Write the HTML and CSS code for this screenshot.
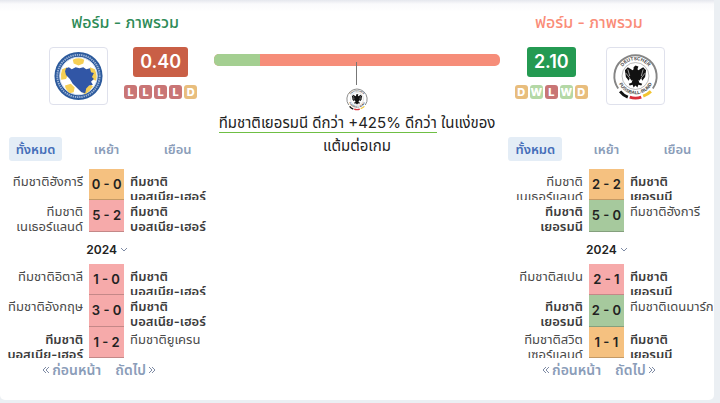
FILE: index.html
```html
<!DOCTYPE html>
<html lang="th">
<head>
<meta charset="utf-8">
<meta name="viewport" content="width=device-width, initial-scale=1">
<title>ฟอร์ม - ภาพรวม</title>
<link rel="stylesheet" href="styles.css">
</head>
<body>
<main class="card">
  <section class="team">
    <h2 class="title title-home">ฟอร์ม - ภาพรวม</h2>
    <div class="summary">
      <div class="crest">
        <svg viewBox="0 0 52 52" role="img" aria-label="บอสเนีย">
          <circle cx="26" cy="26" r="25" fill="#2c5a9c"/>
          <circle cx="26" cy="26" r="22" fill="none" stroke="#9db4d8" stroke-width="2" stroke-dasharray="1.4 .9"/>
          <circle cx="26" cy="26" r="19.5" fill="#fff" stroke="#dbe4f2" stroke-width="1"/>
          <path d="M20 9q6-3 12 0l-1 4-5 2-5-2zM9 19l5-2 2 6-3 6-5 1q-1-6 1-11zM38 17l5 2q3 7 1 12l-4-2-3-6zM12 36l6-2 4 4-1 5-4 1q-5-4-5-8zM33 38l6-3 2 2q-3 5-8 8l-3-2z" fill="#f6cf55"/>
          <path d="M13 18l3-1 3 2 4-2 4 1 4-1 3 2 4-1 1 4 3 1-2 4 2 2-3 3 2 3-4 1-3 3-1 5-4-1-5-5-4-4-3-5-4-4-1-4z" fill="#3156a6"/>
        </svg>
      </div>
      <div class="rating">
        <strong class="score score-low">0.40</strong>
        <div class="form"><span class="l">L</span><span class="l">L</span><span class="l">L</span><span class="l">L</span><span class="d">D</span></div>
      </div>
    </div>
    <nav class="tabs"><button type="button" class="tab active">ทั้งหมด</button><button type="button" class="tab">เหย้า</button><button type="button" class="tab">เยือน</button></nav>
    <div class="matches">
      <div class="match"><span class="name">ทีมชาติฮังการี</span><span class="result draw">0 - 0</span><b class="name">ทีมชาติ<br>บอสเนีย-เฮอร์</b></div>
      <div class="match"><span class="name">ทีมชาติ<br>เนเธอร์แลนด์</span><span class="result loss">5 - 2</span><b class="name">ทีมชาติ<br>บอสเนีย-เฮอร์</b></div>
    </div>
    <button type="button" class="year">2024<svg viewBox="0 0 8 6" aria-hidden="true"><path d="M1 1l3 3 3-3"/></svg></button>
    <div class="matches">
      <div class="match"><span class="name">ทีมชาติอิตาลี</span><span class="result loss">1 - 0</span><b class="name">ทีมชาติ<br>บอสเนีย-เฮอร์</b></div>
      <div class="match"><span class="name">ทีมชาติอังกฤษ</span><span class="result loss">3 - 0</span><b class="name">ทีมชาติ<br>บอสเนีย-เฮอร์</b></div>
      <div class="match"><b class="name">ทีมชาติ<br>บอสเนีย-เฮอร์</b><span class="result loss">1 - 2</span><span class="name">ทีมชาติยูเครน</span></div>
    </div>
    <nav class="pager"><a href="#prev"><svg viewBox="0 0 8 8" aria-hidden="true"><path d="M4 1L1 4l3 3M7 1L4 4l3 3"/></svg>ก่อนหน้า</a><a href="#next">ถัดไป<svg viewBox="0 0 8 8" aria-hidden="true"><path d="M1 1l3 3-3 3M4 1l3 3-3 3"/></svg></a></nav>
  </section>

  <section class="compare">
    <div class="bar"><span class="bar-home"></span></div>
    <div class="pointer"></div>
    <svg class="badge" viewBox="0 0 52 52" aria-hidden="true"><use href="#dfb"/></svg>
    <p class="insight"><span class="mark">ทีมชาติเยอรมนี ดีกว่า +425% ดีกว่า</span> ในแง่ของ<br>แต้มต่อเกม</p>
  </section>

  <section class="team">
    <h2 class="title title-away">ฟอร์ม - ภาพรวม</h2>
    <div class="summary summary-away">
      <div class="rating">
        <strong class="score score-high">2.10</strong>
        <div class="form"><span class="d">D</span><span class="w">W</span><span class="l">L</span><span class="w">W</span><span class="d">D</span></div>
      </div>
      <div class="crest">
        <svg viewBox="0 0 52 52" role="img" aria-label="Deutscher Fussball-Bund">
          <defs>
            <path id="arc-top" d="M9.5 26a16.500 16.500 0 0 1 33 0"/>
            <path id="arc-bottom" d="M7 26a19 19 0 0 0 38 0"/>
          </defs>
          <g id="dfb">
            <circle cx="26" cy="26" r="24" fill="#fff"/>
            <path d="M8 39A22 22 0 1 1 44 39" fill="none" stroke="#858585" stroke-width="2"/>
            <circle cx="26" cy="26" r="14" fill="none" stroke="#999" stroke-width=".7"/>
            <text class="ring"><textPath href="#arc-top" startOffset="50%">DEUTSCHER</textPath></text>
            <text class="ring"><textPath href="#arc-bottom" startOffset="50%">FUSSBALL-BUND</textPath></text>
            <path d="M24 17l2-2 3 1-1 3 1 1 5-3 3 3-1 7-3 4-1-3-2 3-1-1 1 3 3 1-1 2-3-1-1 3-2-2-2 2-1-3-3 1-1-2 3-1 1-3-1 1-2-3-1 3-3-4-1-7 3-3 5 3 1-1z" fill="#111"/>
            <path d="M18 19l2 7M34 19l-2 7M16 23l4 5M36 23l-4 5" stroke="#fff" stroke-width=".6"/>
            <path d="M10 42q3 4 8 6" fill="none" stroke="#111" stroke-width="3"/>
            <path d="M20 48q6 2 12 0" fill="none" stroke="#d9303b" stroke-width="3"/>
            <path d="M34 47q5-2 8-5" fill="none" stroke="#f3c530" stroke-width="3"/>
          </g>
        </svg>
      </div>
    </div>
    <nav class="tabs"><button type="button" class="tab active">ทั้งหมด</button><button type="button" class="tab">เหย้า</button><button type="button" class="tab">เยือน</button></nav>
    <div class="matches">
      <div class="match"><span class="name">ทีมชาติ<br>เนเธอร์แลนด์</span><span class="result draw">2 - 2</span><b class="name">ทีมชาติ<br>เยอรมนี</b></div>
      <div class="match"><b class="name">ทีมชาติ<br>เยอรมนี</b><span class="result win">5 - 0</span><span class="name">ทีมชาติฮังการี</span></div>
    </div>
    <button type="button" class="year">2024<svg viewBox="0 0 8 6" aria-hidden="true"><path d="M1 1l3 3 3-3"/></svg></button>
    <div class="matches">
      <div class="match"><span class="name">ทีมชาติสเปน</span><span class="result loss">2 - 1</span><b class="name">ทีมชาติ<br>เยอรมนี</b></div>
      <div class="match"><b class="name">ทีมชาติ<br>เยอรมนี</b><span class="result win">2 - 0</span><span class="name">ทีมชาติเดนมาร์ก</span></div>
      <div class="match"><span class="name">ทีมชาติสวิต<br>เซอร์แลนด์</span><span class="result draw">1 - 1</span><b class="name">ทีมชาติ<br>เยอรมนี</b></div>
    </div>
    <nav class="pager"><a href="#prev"><svg viewBox="0 0 8 8" aria-hidden="true"><path d="M4 1L1 4l3 3M7 1L4 4l3 3"/></svg>ก่อนหน้า</a><a href="#next">ถัดไป<svg viewBox="0 0 8 8" aria-hidden="true"><path d="M1 1l3 3-3 3M4 1l3 3-3 3"/></svg></a></nav>
  </section>
</main>
</body>
</html>
```
FILE: styles.css
```css
* { box-sizing: border-box; }
body {
  margin: 0;
  padding-right: 6px;
  background: #ebeff3;
  color: #222;
  font: 12px/15px Inter, "Noto Sans Thai", "Noto Sans", sans-serif;
}
button { font: inherit; border: 0; background: none; padding: 0; cursor: pointer; }
.card {
  display: grid;
  grid-template-columns: 3fr 4fr 3fr;
  padding-bottom: 20px;
  background: linear-gradient(#e5e7ee, #fafafc 4px, #fff 12px);
  border-radius: 0 0 5px 5px;
}
.team { display: flex; flex-direction: column; min-width: 0; }
.title { margin: 12px 0 15px; padding-left: 36px; text-align: center; font-size: 16px; line-height: 20px; font-weight: 500; }
.title-home { color: #2e8b57; }
.title-away { padding: 0 36px 0 0; color: #fa8c78; }
.summary { display: flex; justify-content: flex-end; gap: 16px; padding-right: 17px; }
.summary-away { justify-content: flex-start; padding: 0 0 0 15px; gap: 18px; }
.crest { width: 59px; height: 58px; padding: 3px; border: 1px solid #dfe1ec; border-radius: 4px; background: #fff; }
.crest svg { display: block; width: 100%; height: 100%; }
.ring { font: 600 5px "Liberation Sans", sans-serif; text-anchor: middle; fill: #444; }
.rating { display: flex; flex-direction: column; align-items: center; gap: 8px; }
.score { padding: 0 7px; border-radius: 3px; color: #fff; font-size: 18px; line-height: 30px; font-weight: 600; }
.score-low { background: #c95f46; }
.score-high { background: #249a52; }
.form { display: flex; gap: 2px; }
.form span { width: 13px; border-radius: 3px; color: #fff; font-size: 11px; line-height: 14px; font-weight: 800; text-align: center; }
.form .l { background: #c97575; }
.form .d { background: #e8bd7d; }
.form .w { background: #b4d8a5; }
.tabs { display: grid; grid-template-columns: repeat(3, 1fr); justify-items: center; margin-top: 32px; padding-right: 1px; }
.tab { padding: 0 7px; border-radius: 3px; color: #8b9db9; font-size: 13px; font-weight: 600; line-height: 24px; }
.tab.active { background: #e4edf6; color: #466fb9; }
.matches { margin-top: 8px; padding-right: 1px; }
.match { display: grid; grid-template-columns: minmax(0, 1fr) 35px minmax(0, 1fr); height: 31px; white-space: nowrap; }
.match:nth-child(even) { height: 32px; }
.name { height: 31px; padding: 5px 6px 0; overflow: hidden; color: #4a4a4a; font-size: 13px; line-height: 15px; }
.name:first-child { justify-self: end; text-align: right; }
.match:nth-child(even) .name { height: 32px; padding-top: 4px; }
b.name { font-weight: 600; color: #3c3c3c; }
.result { border-bottom: 1px solid #0003; text-align: center; font-size: 13px; line-height: 30px; font-weight: 600; }
.draw { background: #f5c180; }
.loss { background: #f6aaaa; }
.win { background: #a6c99d; }
.year { display: flex; align-items: center; justify-content: center; gap: 3px; margin-top: 8px; color: #222; font-weight: 600; line-height: 20px; }
.year svg { width: 8px; height: 6px; }
.year + .matches { margin-top: 4px; }
.year path, .pager path { fill: none; stroke: #7e8ba5; stroke-width: 1; }
.pager { display: flex; justify-content: center; gap: 14px; padding-right: 16px; margin-top: 2px; }
.pager a { display: flex; align-items: center; gap: 2px; color: #8b9db9; font-size: 14px; line-height: 20px; font-weight: 600; text-decoration: none; }
.pager svg { width: 8px; height: 8px; }
.compare { display: flex; flex-direction: column; align-items: center; padding-top: 54px; }
.bar { width: 100%; height: 12px; border-radius: 5px; overflow: hidden; background: #f68d79; }
.bar-home { display: block; width: 16%; height: 100%; background: #a4cf91; }
.pointer { width: 1px; height: 23px; margin-top: -4px; background: #777; }
.badge { width: 24px; height: 24px; margin-top: 2px; }
.insight { margin: 0; text-align: center; font-size: 15px; line-height: 23px; white-space: nowrap; }
.mark { border-bottom: 1px solid #6fbf44; }
```
